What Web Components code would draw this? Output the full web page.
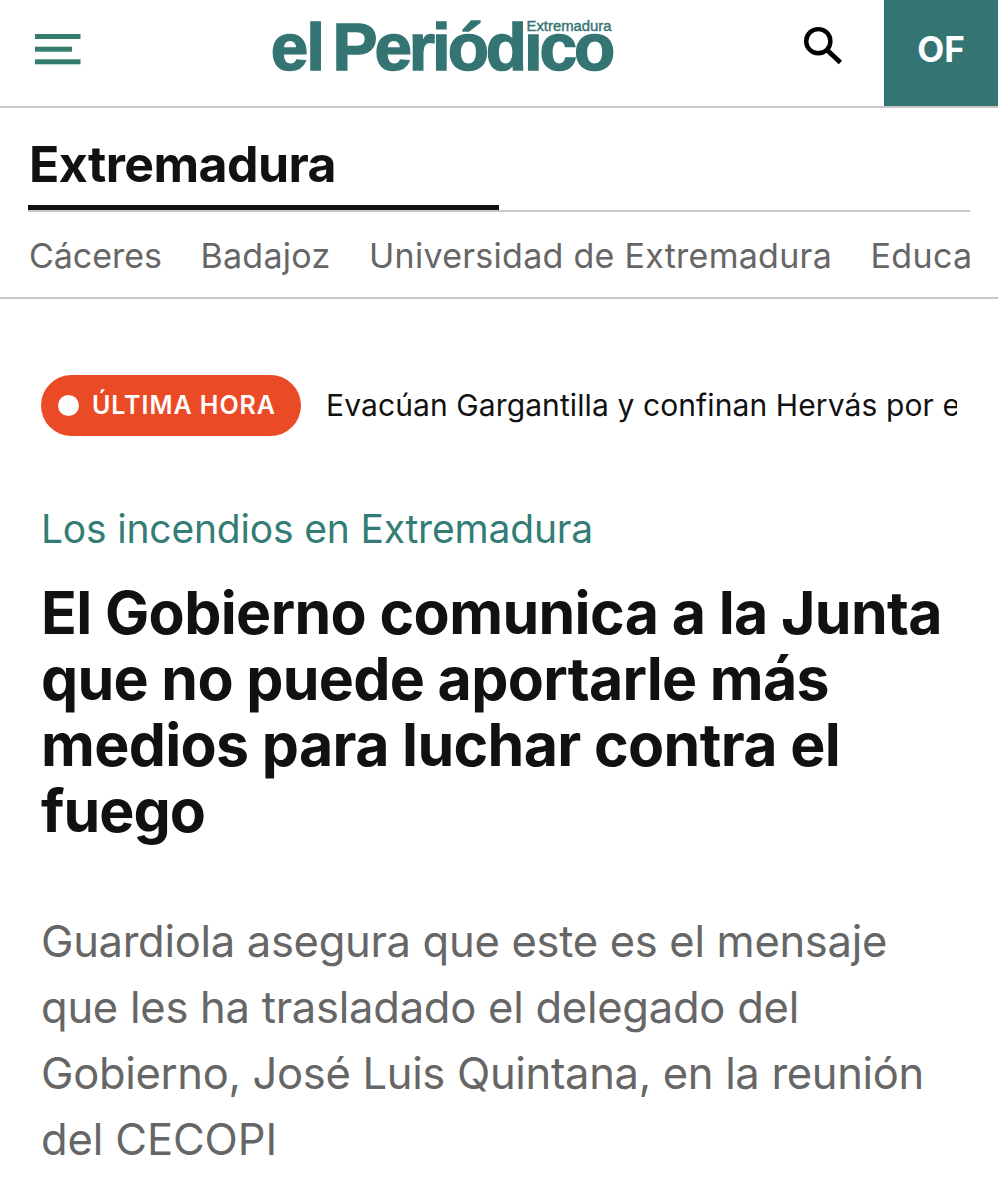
<!DOCTYPE html>
<html lang="es">
<head>
<meta charset="utf-8">
<title>el Periódico Extremadura</title>
<style>
  body {
    margin: 0;
    background: #fff;
    color: #111;
    font-family: Inter, "Liberation Sans", sans-serif;
    --brand: #347574;
    --rule: #c8c8c8;
  }
</style>
</head>
<body>
<news-page>
  <site-header slot="header" user="OF"></site-header>
  <section-nav slot="nav">
    <fit-line slot="title" measure="307">Extremadura</fit-line>
    <fit-line measure="133">Cáceres</fit-line>
    <fit-line measure="130">Badajoz</fit-line>
    <fit-line measure="463">Universidad de Extremadura</fit-line>
    <fit-line measure="102">Educa</fit-line>
  </section-nav>
  <breaking-news label="ÚLTIMA HORA">
    <fit-line measure="634">Evacúan Gargantilla y confinan Hervás por e</fit-line>
  </breaking-news>
  <news-article>
    <fit-line slot="kicker" measure="552">Los incendios en Extremadura</fit-line>
    <fit-line slot="headline" measure="901">El Gobierno comunica a la Junta</fit-line>
    <fit-line slot="headline" measure="788">que no puede aportarle más</fit-line>
    <fit-line slot="headline" measure="799">medios para luchar contra el</fit-line>
    <fit-line slot="headline" measure="164">fuego</fit-line>
    <fit-line slot="lead" measure="846">Guardiola asegura que este es el mensaje</fit-line>
    <fit-line slot="lead" measure="758">que les ha trasladado el delegado del</fit-line>
    <fit-line slot="lead" measure="883">Gobierno, José Luis Quintana, en la reunión</fit-line>
    <fit-line slot="lead" measure="236">del CECOPI</fit-line>
  </news-article>
</news-page>

<script>
function template(html) {
    const tmpl = document.createElement('template');
    tmpl.innerHTML = html;
    return tmpl;
}

class BaseElement extends HTMLElement {
    constructor() {
        super();
        this.attachShadow({mode: "open"});
        this.shadowRoot.appendChild(this.constructor.tmpl.content.cloneNode(true));
    }
}

class NewsPage extends BaseElement {
    static tmpl = template(`
      <style>
        :host {display: block; min-height: 1200px; overflow: hidden;}
        main {padding: 76px 41px 0;}
      </style>
      <slot name="header"></slot>
      <slot name="nav"></slot>
      <main><slot></slot></main>
    `);
}

class SiteHeader extends BaseElement {
    static tmpl = template(`
      <style>
        :host {
          display: flex;
          height: 106px;
          border-bottom: 2px solid var(--rule);
        }
        svg {display: block; flex: none;}
        .menu {margin: 34px 0 0 35px;}
        .logo {margin-left: 185px; overflow: visible;}
        .search {margin: 26px 0 0 181px;}
        .user {
          display: flex;
          align-items: center;
          justify-content: center;
          box-sizing: border-box;
          width: 114px;
          margin-left: auto;
          padding-bottom: 8px;
          background: var(--brand);
          color: #fff;
          font-size: 35px;
          font-weight: 700;
        }
      </style>
      <svg class="menu" width="46" height="31" fill="#347d6e">
        <rect width="45.5" height="5"/>
        <rect y="12.7" width="37" height="5"/>
        <rect y="25.3" width="45.5" height="5"/>
      </svg>
      <svg class="logo" width="356" height="100" fill="#347574"
           font-family="Liberation Sans, Arial, sans-serif">
        <g font-size="67.5" font-weight="700" stroke="#347574" stroke-width="1.5">
          <text x="4.8" y="69.5" letter-spacing="-2">el</text>
          <text x="66.5" y="69.5" letter-spacing="-3.1">Periódico</text>
        </g>
        <!-- clears the dot of the last i to make room for the edition name -->
        <rect x="260.6" y="14" width="90" height="17.5" fill="#fff"/>
        <text x="260.5" y="30.5" font-size="14" textLength="85" stroke="#347574"
              stroke-width=".4" lengthAdjust="spacingAndGlyphs">Extremadura</text>
      </svg>
      <svg class="search" width="40" height="40" fill="none" stroke="#000">
        <circle cx="15.3" cy="15.2" r="12.1" stroke-width="4.4"/>
        <path d="M23.5 23.4 37.4 36.6" stroke-width="4.8"/>
      </svg>
      <div class="user"></div>
    `);

    connectedCallback() {
        this.shadowRoot.querySelector(".user").textContent = this.getAttribute("user");
    }
}

class SectionNav extends BaseElement {
    static tmpl = template(`
      <style>
        :host {
          display: block;
          border-bottom: 2px solid var(--rule);
          padding: 0 28px;
        }
        .title {
          height: 102px;
          border-bottom: 2px solid var(--rule);
        }
        .current {
          box-sizing: border-box;
          width: 471px;
          height: 102px;
          padding: 26px 0 0 1px;
          border-bottom: 5px solid #111;
          font: 700 50px/60px Inter, sans-serif;
        }
        nav {
          display: flex;
          gap: 38.5px;
          height: 85px;
          padding-left: 1px;
          overflow: hidden;
          color: #666;
          font-size: 34px;
          line-height: 88px;
        }
      </style>
      <div class="title"><div class="current"><slot name="title"></slot></div></div>
      <nav><slot></slot></nav>
    `);
}

class BreakingNews extends BaseElement {
    static tmpl = template(`
      <style>
        :host {display: flex; gap: 25px; height: 61px;}
        .pill {
          display: flex;
          flex: none;
          align-items: center;
          gap: 13px;
          box-sizing: border-box;
          width: 260px;
          padding-left: 17px;
          border-radius: 31px;
          background: #ea4b26;
          color: #fff;
          font-size: 25px;
          font-weight: 600;
        }
        .pill i {
          flex: none;
          width: 21px;
          height: 21px;
          border-radius: 50%;
          background: #fff;
        }
        .pill fit-line {padding-bottom: 2px;}
        .text {
          flex: 1;
          overflow: hidden;
          font-size: 30px;
          line-height: 60px;
        }
      </style>
      <div class="pill"><i></i><fit-line measure="184"></fit-line></div>
      <div class="text"><slot></slot></div>
    `);

    connectedCallback() {
        this.shadowRoot.querySelector("fit-line").textContent = this.getAttribute("label");
    }
}

class NewsArticle extends BaseElement {
    static tmpl = template(`
      <style>
        :host {display: block;}
        p, h1 {margin: 0;}
        .kicker {
          margin-top: 68px;
          color: #347d76;
          font-size: 39px;
          line-height: 50px;
        }
        h1 {
          margin-top: 26px;
          font-size: 59px;
          font-weight: 700;
          line-height: 66px;
        }
        .lead {
          margin-top: 64px;
          color: #666;
          font-size: 43.5px;
          line-height: 66px;
        }
      </style>
      <p class="kicker"><slot name="kicker"></slot></p>
      <h1><slot name="headline"></slot></h1>
      <p class="lead"><slot name="lead"></slot></p>
    `);
}

// FitLine sets its letter spacing so that one line of text
// fills the width given in the measure attribute.
class FitLine extends BaseElement {
    static tmpl = template(`
      <style>
        :host {display: block; width: max-content; white-space: nowrap;}
      </style>
      <slot></slot>
    `);

    connectedCallback() {
        const count = this.textContent.length;
        if(count === 0) {
            return;
        }
        const width = this.getBoundingClientRect().width;
        const spacing = (Number(this.getAttribute("measure")) - width) / count;
        this.style.letterSpacing = `${spacing.toFixed(3)}px`;
    }
}

customElements.define("news-page", NewsPage);
customElements.define("site-header", SiteHeader);
customElements.define("section-nav", SectionNav);
customElements.define("breaking-news", BreakingNews);
customElements.define("news-article", NewsArticle);
// Defined last: it measures text in the fonts that the elements above set.
customElements.define("fit-line", FitLine);
</script>
</body>
</html>
